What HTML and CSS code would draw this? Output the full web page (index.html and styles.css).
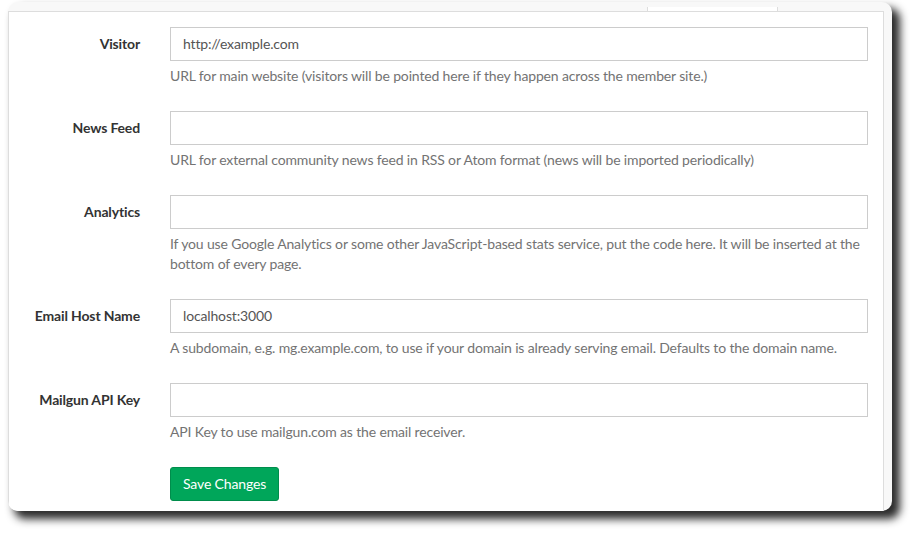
FILE: index.html
```html
<!DOCTYPE html>
<html>
<head>
<meta charset="utf-8">
<link rel="stylesheet" href="styles.css">
</head>
<body>
<div class="page">
<div class="frame">
  <div class="tabstrip"><span class="tab"></span></div>
  <div class="card">
    <form class="form">
      <div class="group">
        <label class="label">Visitor</label>
        <div class="field">
          <div class="input">http://example.com</div>
          <p class="help">URL for main website (visitors will be pointed here if they happen across the member site.)</p>
        </div>
      </div>
      <div class="group">
        <label class="label">News Feed</label>
        <div class="field">
          <div class="input"></div>
          <p class="help">URL for external community news feed in RSS or Atom format (news will be imported periodically)</p>
        </div>
      </div>
      <div class="group">
        <label class="label">Analytics</label>
        <div class="field">
          <div class="input"></div>
          <p class="help">If you use Google Analytics or some other JavaScript-based stats service, put the code here. It will be inserted at the bottom of every page.</p>
        </div>
      </div>
      <div class="group">
        <label class="label">Email Host Name</label>
        <div class="field">
          <div class="input">localhost:3000</div>
          <p class="help">A subdomain, e.g. mg.example.com, to use if your domain is already serving email. Defaults to the domain name.</p>
        </div>
      </div>
      <div class="group">
        <label class="label">Mailgun API Key</label>
        <div class="field">
          <div class="input"></div>
          <p class="help">API Key to use mailgun.com as the email receiver.</p>
        </div>
      </div>
      <div class="group">
        <span></span>
        <div class="field">
          <button type="button" class="btn">Save Changes</button>
        </div>
      </div>
    </form>
  </div>
</div>
</div>
</body>
</html>
```
FILE: styles.css
```css
html, body {
  margin: 0;
  padding: 0;
  background: #ffffff;
}
body {
  font-family: "Lato", "Liberation Sans", sans-serif;
  font-size: 14px;
  line-height: 20px;
  letter-spacing: -0.15px;
  color: #333;
}
.page {
  padding: 2px 0 23px 8px;
}
.frame {
  position: relative;
  width: 884px;
  height: 509px;
  background: #f8f8f8;
  border-radius: 10px;
  overflow: hidden;
  display: flex;
  flex-direction: column;
  box-shadow: 7px 7px 8px 1px rgba(20, 20, 20, 0.9);
}
.tabstrip {
  height: 4px;
  padding-top: 5px;
  display: flex;
}
.tab {
  margin-left: 639px;
  width: 131px;
  height: 5px;
  box-sizing: border-box;
  background: #fff;
  border-left: 1px solid #ddd;
  border-right: 1px solid #ddd;
}
.card {
  flex: 1;
  width: 876px;
  box-sizing: border-box;
  background: #fff;
  border: 1px solid #ddd;
  border-bottom: none;
  padding: 15px 15px 0 0;
}
.form {
  margin: 0;
  display: flex;
  flex-direction: column;
  gap: 15px;
}
.group {
  display: grid;
  grid-template-columns: 131px 1fr;
  column-gap: 30px;
}
.label {
  text-align: right;
  font-weight: bold;
  padding-top: 7px;
  color: #333;
}
.input {
  height: 34px;
  box-sizing: border-box;
  border: 1px solid #ccc;
  padding: 6px 12px;
  color: #555;
  background: #fff;
}
.help {
  margin: 5px 0 10px;
  color: #737373;
}
.btn {
  font: inherit;
  letter-spacing: inherit;
  height: 34px;
  padding: 6px 12px;
  border: 1px solid #008d4c;
  border-radius: 3px;
  background: #00a65a;
  color: #fff;
  cursor: pointer;
}
```
